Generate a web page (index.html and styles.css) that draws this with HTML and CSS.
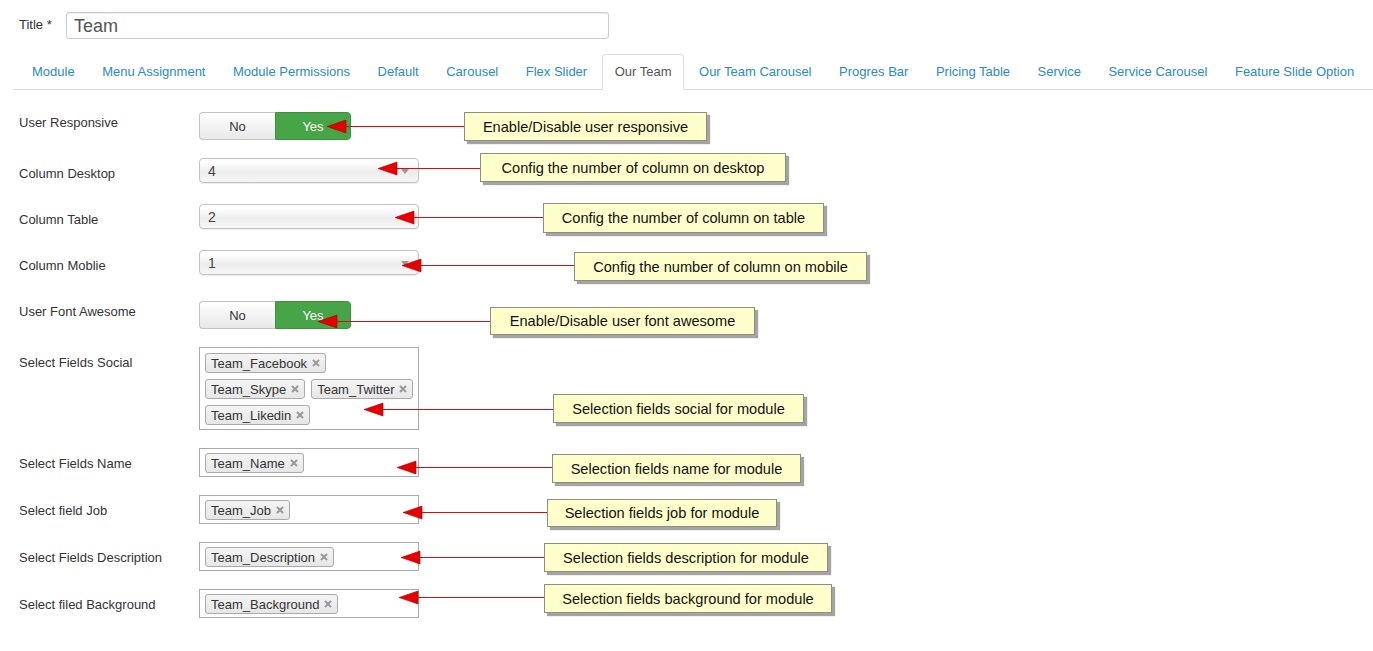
FILE: index.html
```html
<!DOCTYPE html>
<html lang="en">
<head>
<meta charset="utf-8">
<title>Our Team module options</title>
<link rel="stylesheet" href="styles.css">
</head>
<body>
<div class="page">
  <div class="title-row">
    <label class="title-label">Title *</label>
    <div class="title-input">Team</div>
  </div>

  <ul class="tabs">
    <li class="tab"><a>Module</a></li>
    <li class="tab"><a>Menu Assignment</a></li>
    <li class="tab"><a>Module Permissions</a></li>
    <li class="tab"><a>Default</a></li>
    <li class="tab"><a>Carousel</a></li>
    <li class="tab"><a>Flex Slider</a></li>
    <li class="tab active"><a>Our Team</a></li>
    <li class="tab"><a>Our Team Carousel</a></li>
    <li class="tab"><a>Progres Bar</a></li>
    <li class="tab"><a>Pricing Table</a></li>
    <li class="tab"><a>Service</a></li>
    <li class="tab"><a>Service Carousel</a></li>
    <li class="tab"><a>Feature Slide Option</a></li>
  </ul>

  <div class="form">
    <div class="group">
      <div class="label flush">User Responsive</div>
      <div class="toggle"><span class="opt no">No</span><span class="opt yes">Yes</span></div>
    </div>
    <div class="group">
      <div class="label">Column Desktop</div>
      <div class="select">4</div>
    </div>
    <div class="group">
      <div class="label">Column Table</div>
      <div class="select">2</div>
    </div>
    <div class="group wide-gap">
      <div class="label">Column Moblie</div>
      <div class="select">1</div>
    </div>
    <div class="group">
      <div class="label flush">User Font Awesome</div>
      <div class="toggle"><span class="opt no">No</span><span class="opt yes">Yes</span></div>
    </div>
    <div class="group">
      <div class="label">Select Fields Social</div>
      <div class="multi tall">
        <span class="tag">Team_Facebook<svg class="x" viewBox="0 0 8 8"><path d="M1 1L7 7M7 1L1 7"/></svg></span>
        <span class="tag">Team_Skype<svg class="x" viewBox="0 0 8 8"><path d="M1 1L7 7M7 1L1 7"/></svg></span>
        <span class="tag">Team_Twitter<svg class="x" viewBox="0 0 8 8"><path d="M1 1L7 7M7 1L1 7"/></svg></span>
        <span class="tag">Team_Likedin<svg class="x" viewBox="0 0 8 8"><path d="M1 1L7 7M7 1L1 7"/></svg></span>
      </div>
    </div>
    <div class="group">
      <div class="label">Select Fields Name</div>
      <div class="multi"><span class="tag">Team_Name<svg class="x" viewBox="0 0 8 8"><path d="M1 1L7 7M7 1L1 7"/></svg></span></div>
    </div>
    <div class="group">
      <div class="label">Select field Job</div>
      <div class="multi"><span class="tag">Team_Job<svg class="x" viewBox="0 0 8 8"><path d="M1 1L7 7M7 1L1 7"/></svg></span></div>
    </div>
    <div class="group">
      <div class="label">Select Fields Description</div>
      <div class="multi"><span class="tag">Team_Description<svg class="x" viewBox="0 0 8 8"><path d="M1 1L7 7M7 1L1 7"/></svg></span></div>
    </div>
    <div class="group">
      <div class="label">Select filed Background</div>
      <div class="multi"><span class="tag">Team_Background<svg class="x" viewBox="0 0 8 8"><path d="M1 1L7 7M7 1L1 7"/></svg></span></div>
    </div>
  </div>

  <svg class="arrows" width="1373" height="651" viewBox="0 0 1373 651">
    <g class="lines">
      <path d="M346 126.5H464"/>
      <path d="M397 168.5H480"/>
      <path d="M414 217.5H543"/>
      <path d="M421 265.5H574"/>
      <path d="M337 321.5H490"/>
      <path d="M383 409.5H553"/>
      <path d="M416 467.5H552"/>
      <path d="M422 512.5H547"/>
      <path d="M420 557.5H544"/>
      <path d="M418 597.5H544"/>
    </g>
    <g class="heads">
      <polygon points="327,126.5 346,120 346,133"/>
      <polygon points="378,168.5 397,162 397,175"/>
      <polygon points="395,217.5 414,211 414,224"/>
      <polygon points="402,265.5 421,259 421,272"/>
      <polygon points="318,321.5 337,315 337,328"/>
      <polygon points="364,409.5 383,403 383,416"/>
      <polygon points="397,467.5 416,461 416,474"/>
      <polygon points="403,512.5 422,506 422,519"/>
      <polygon points="401,557.5 420,551 420,564"/>
      <polygon points="399,597.5 418,591 418,604"/>
    </g>
  </svg>

  <div class="note n1">Enable/Disable user responsive</div>
  <div class="note n2">Config the number of column on desktop</div>
  <div class="note n3">Config the number of column on table</div>
  <div class="note n4">Config the number of column on mobile</div>
  <div class="note n5">Enable/Disable user font awesome</div>
  <div class="note n6">Selection fields social for module</div>
  <div class="note n7">Selection fields name for module</div>
  <div class="note n8">Selection fields job for module</div>
  <div class="note n9">Selection fields description for module</div>
  <div class="note n10">Selection fields background for module</div>
</div>
</body>
</html>
```

FILE: styles.css
```css
* { box-sizing: border-box; }

body {
  margin: 0;
  background: #fff;
  color: #333;
  font-family: "Liberation Sans", Arial, sans-serif;
}

.page {
  position: relative;
  width: 1373px;
  height: 651px;
  overflow: hidden;
}

/* Title */
.title-row {
  display: flex;
  align-items: center;
  padding: 12px 0 0 19px;
}
.title-label {
  width: 47px;
  font-size: 13px;
  line-height: 18px;
  margin-top: -2px;
  color: #333;
}
.title-input {
  width: 543px;
  height: 27px;
  border: 1px solid #ccc;
  border-radius: 3px;
  padding: 2px 0 0 7px;
  font-size: 18px;
  line-height: 23px;
  color: #555;
  box-shadow: inset 0 1px 1px rgba(0, 0, 0, 0.075);
}

/* Tabs */
.tabs {
  list-style: none;
  display: flex;
  margin: 15px 0 0 13px;
  padding: 0 0 0 6px;
  border-bottom: 1px solid #ddd;
}
.tab a {
  display: block;
  margin-right: 2px;
  margin-bottom: -1px;
  padding: 8px 11.5px 8px 12px;
  line-height: 18px;
  font-size: 13px;
  color: #2a8bc5;
  border: 1px solid transparent;
  border-radius: 4px 4px 0 0;
  white-space: nowrap;
}
.tab.active a {
  color: #555;
  background: #fff;
  border-color: #ddd #ddd transparent;
}

/* Form */
.form {
  padding: 22px 0 0 19px;
}
.group {
  display: flex;
  align-items: flex-start;
  margin-bottom: 18px;
}
.group.wide-gap {
  margin-bottom: 23px;
}
.label {
  width: 180px;
  padding-top: 7px;
  font-size: 13px;
  line-height: 18px;
  color: #333;
}
.label.flush {
  padding-top: 2px;
}

/* Yes / No toggle */
.toggle {
  display: flex;
  width: 152px;
  height: 28px;
}
.opt {
  width: 76px;
  display: flex;
  align-items: center;
  justify-content: center;
  font-size: 13px;
}
.opt.no {
  color: #333;
  background: linear-gradient(#ffffff, #e8e8e8);
  border: 1px solid #c4c4c4;
  border-right: none;
  border-radius: 4px 0 0 4px;
}
.opt.yes {
  color: #fff;
  background: #47a447;
  border: 1px solid #3f913f;
  border-radius: 0 4px 4px 0;
}

/* Single select */
.select {
  position: relative;
  width: 220px;
  height: 25px;
  margin-bottom: 3px;
  padding-left: 8px;
  border: 1px solid #c2c2c2;
  border-radius: 4px;
  background: linear-gradient(#ffffff 15%, #ececec 55%, #f6f6f6);
  box-shadow: 0 1px 1px rgba(0, 0, 0, 0.08);
  font-size: 14px;
  line-height: 24px;
  color: #444;
}
.select::after {
  content: "";
  position: absolute;
  right: 9px;
  top: 10px;
  border-left: 4px solid transparent;
  border-right: 4px solid transparent;
  border-top: 5px solid #999;
}

/* Multi select with tags */
.multi {
  display: flex;
  flex-wrap: wrap;
  align-content: flex-start;
  column-gap: 6px;
  width: 220px;
  min-height: 29px;
  padding: 1px 2px 0 5px;
  border: 1px solid #aaa;
  background: #fff;
}
.multi.tall {
  height: 83px;
  padding-top: 2px;
}
.tag {
  display: inline-flex;
  align-items: center;
  height: 20px;
  margin: 3px 0;
  padding: 0 5px;
  border: 1px solid #aaa;
  border-radius: 3px;
  background: linear-gradient(#f4f4f4, #e6e6e6);
  font-size: 13px;
  color: #333;
  white-space: nowrap;
}
.tag .x {
  width: 8px;
  height: 8px;
  margin-left: 5px;
  fill: none;
  stroke: #999;
  stroke-width: 2;
}

/* Annotation overlay */
.arrows {
  position: absolute;
  left: 0;
  top: 0;
  pointer-events: none;
}
.arrows .lines path {
  fill: none;
  stroke: #cc1111;
  stroke-width: 1;
}
.arrows .heads polygon {
  fill: #e60000;
  stroke: #a80000;
  stroke-width: 0.6;
}

.note {
  position: absolute;
  height: 29px;
  display: flex;
  align-items: center;
  justify-content: center;
  background: #ffffcb;
  border: 1px solid #8e8e80;
  box-shadow: 3px 3px 1px #a4a4a4;
  font-size: 14.6px;
  color: #111;
  white-space: nowrap;
}
.n1 { left: 464px; top: 112px; width: 243px; }
.n2 { left: 480px; top: 153px; width: 306px; }
.n3 { left: 543px; top: 203px; width: 281px; height: 30px; }
.n4 { left: 574px; top: 252px; width: 293px; }
.n5 { left: 490px; top: 307px; width: 265px; height: 28px; }
.n6 { left: 553px; top: 394px; width: 251px; }
.n7 { left: 552px; top: 454px; width: 249px; }
.n8 { left: 547px; top: 499px; width: 230px; height: 28px; }
.n9 { left: 544px; top: 543px; width: 284px; }
.n10 { left: 544px; top: 584px; width: 288px; }
```
